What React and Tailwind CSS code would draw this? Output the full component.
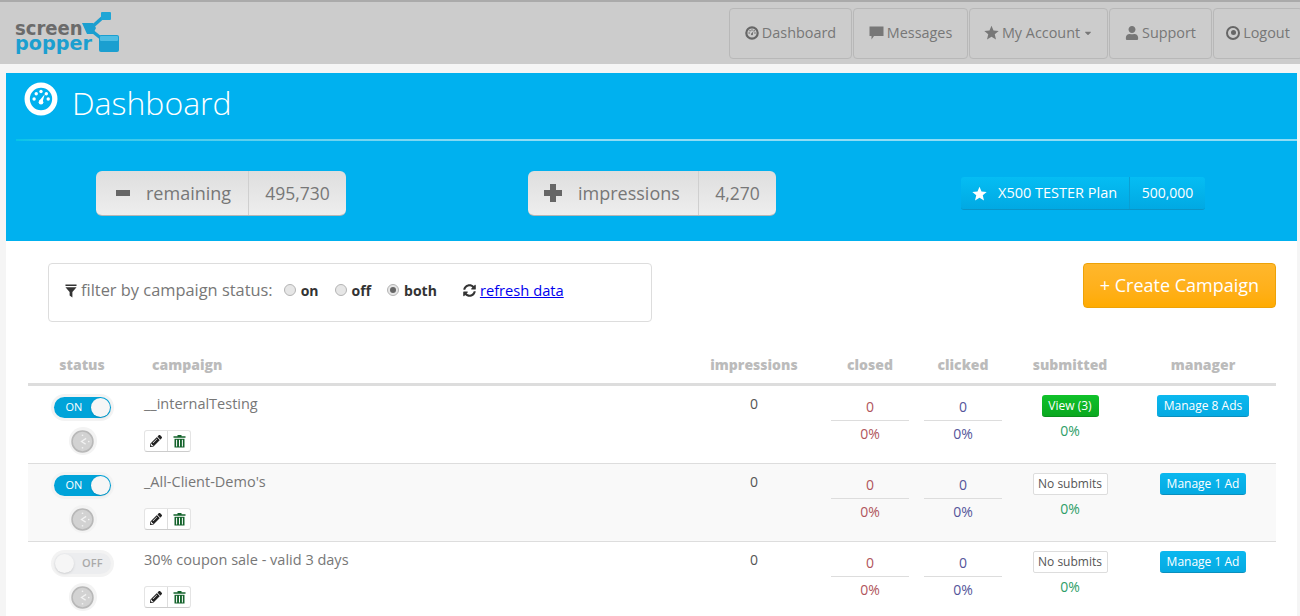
import React from "react";
import { FaUser, FaSyncAlt, FaPencilAlt, FaCaretDown } from "react-icons/fa";

function Gauge({ size = 14, color = "#777", bg = "transparent" }) {
  return (
    <svg width={size} height={size} viewBox="0 0 32 32" className="shrink-0">
      <circle cx="16" cy="16" r="13" fill={bg} stroke={color} strokeWidth="5" />
      <circle cx="9.5" cy="16" r="1.6" fill={color} />
      <circle cx="11.5" cy="11" r="1.6" fill={color} />
      <circle cx="16" cy="9" r="1.6" fill={color} />
      <circle cx="21" cy="11" r="1.6" fill={color} />
      <circle cx="22.8" cy="16" r="1.6" fill={color} />
      <path d="M19.5 11.5 L17.5 18.5 L14.5 17.5 Z" fill={color} />
      <circle cx="16" cy="19" r="2.2" fill={color} />
    </svg>
  );
}

function Star({ size = 15, color = "#fff" }) {
  return (
    <svg width={size} height={size} viewBox="0 0 24 24" className="shrink-0">
      <path d="M12 1 L15.2 8.8 L23.5 9.4 L17.2 14.8 L19.2 23 L12 18.6 L4.8 23 L6.8 14.8 L0.5 9.4 L8.8 8.8 Z" fill={color} />
    </svg>
  );
}

function Bubble() {
  return (
    <svg width="15" height="14" viewBox="0 0 15 14" className="shrink-0">
      <path d="M0.5 0.5 H14.5 V10 H5 L2.5 13.5 V10 H0.5 Z" fill="#777" />
    </svg>
  );
}

function Trash() {
  return (
    <svg width="13" height="14" viewBox="0 0 13 14">
      <path d="M4.5 1 H8.5 V2.2 H12.5 V3.8 H0.5 V2.2 H4.5 Z" fill="#14632c" />
      <path d="M1.5 4.8 H11.5 V13.5 H1.5 Z" fill="#14632c" />
      <path d="M3.6 5.8 V12.5 M6.5 5.8 V12.5 M9.4 5.8 V12.5" stroke="#fff" strokeWidth="1" />
    </svg>
  );
}

function Logo() {
  return (
    <div className="relative w-[104px] h-[42px] ml-[16px] mt-[10px]">
      <div className="absolute left-[-1px] top-[9px] text-[19px] leading-[14px] font-extrabold text-[#6b6b6b] [font-family:'DejaVu_Sans',sans-serif] scale-x-[0.95] origin-left">screen</div>
      <div className="absolute left-[-1px] top-[23px] text-[20px] leading-[17px] font-extrabold text-[#1b9fd0] [font-family:'DejaVu_Sans',sans-serif] scale-x-[0.96] origin-left">popper</div>
      <svg width="104" height="42" viewBox="0 0 104 42" className="absolute left-0 top-0">
        <path d="M76 15 L86 6" stroke="#1b9fd0" strokeWidth="3.5" fill="none" />
        <path d="M76 19 L86 27" stroke="#1b9fd0" strokeWidth="3.5" fill="none" />
        <rect x="85" y="0" width="10" height="8" rx="1" fill="#1fa6d6" />
        <path d="M66 11 H77 L80 16 L77 22 H71 Z" fill="#1b9fd0" />
        <rect x="83" y="23" width="20" height="17" rx="2" fill="#1b9fd0" />
        <rect x="84" y="24" width="18" height="5" rx="1" fill="#4fbde3" />
      </svg>
    </div>
  );
}

function NavBtn({ w, icon, children }) {
  return (
    <div style={{ width: w }} className="h-[51px] shrink-0 flex items-center justify-center gap-[3px] pb-[2px] border border-[#b8b8b8] rounded-[4px] text-[14.4px] text-[#777]">
      {icon}
      {children}
    </div>
  );
}

function Stat({ icon, label, value, w, labelW }) {
  return (
    <div style={{ width: w }} className="h-[45px] flex rounded-[6px] border-b border-[#b5b5b5] bg-gradient-to-b from-[#dedede] to-[#eeeeee] text-[18px] text-[#777]">
      <div style={{ width: labelW }} className="flex items-center border-r border-[#cfcfcf] shrink-0">
        <span className="w-[50px] flex justify-center text-[#666]">{icon}</span>
        <span>{label}</span>
      </div>
      <div className="flex-1 flex items-center justify-center text-[17.5px]">{value}</div>
    </div>
  );
}

function Toggle({ on }) {
  return (
    <div className="rounded-full p-[3px] bg-[#f3f3f3] w-[63px] h-[27px]">
      {on ? (
        <div className="h-[21px] rounded-full bg-[#00a3d9] flex items-center justify-between pl-[12px] pr-[1px]">
          <span className="text-[11px] text-white">ON</span>
          <span className="w-[19px] h-[19px] rounded-full bg-[#f6f6f6] shadow" />
        </div>
      ) : (
        <div className="h-[21px] rounded-full bg-[#ecedef] flex items-center justify-between pl-[1px] pr-[8px]">
          <span className="w-[19px] h-[19px] rounded-full bg-[#f6f6f6] shadow" />
          <span className="text-[11px] font-semibold text-[#aaa]">OFF</span>
        </div>
      )}
    </div>
  );
}

function Clock() {
  return (
    <div className="w-[28px] h-[28px] ml-[1px] rounded-full bg-[#f3f3f3] flex items-center justify-center">
      <svg width="23" height="23" viewBox="0 0 22 22">
        <circle cx="11" cy="11" r="10" fill="#d2d2d2" stroke="#b8b8b8" strokeWidth="1.5" />
        <path d="M14.5 8 L10 11 L14 13.5" stroke="#f2f2f2" strokeWidth="1.2" fill="none" />
        <circle cx="17" cy="11" r="0.8" fill="#f2f2f2" />
        <circle cx="11" cy="17" r="0.8" fill="#f2f2f2" />
        <circle cx="11" cy="5" r="0.8" fill="#f2f2f2" />
      </svg>
    </div>
  );
}

function Ratio({ n, p, color }) {
  return (
    <div style={{ color }} className="flex flex-col items-center pt-[11px] text-[14px]">
      <div className="w-[78px] h-[24px] border-b border-[#ddd] text-center leading-[20px]">{n}</div>
      <div className="leading-[20px] mt-[3px]">{p}</div>
    </div>
  );
}

function Row({ name, on, submit, manage, stripe, last }) {
  return (
    <div className={`grid grid-cols-[108px_548px_140px_92px_94px_120px_146px] h-[78px] ${last ? "" : "border-b border-[#ddd]"} ${stripe ? "bg-[#f9f9f9]" : "bg-white"}`}>
      <div className="flex flex-col items-center pt-[8px] gap-[6px]">
        <Toggle on={on} />
        <Clock />
      </div>
      <div className="pl-[8px] pt-[8px]">
        <div className="text-[14.5px] leading-[20px] text-[#777]">{name}</div>
        <div className="mt-[16px] flex w-[47px] h-[22px] rounded-[3px] border border-[#e4e4e4] border-b-[#ccc] bg-white">
          <span className="w-[23px] flex items-center justify-center border-r border-[#ddd]"><FaPencilAlt size={12} color="#222" /></span>
          <span className="flex-1 flex items-center justify-center"><Trash /></span>
        </div>
      </div>
      <div className="text-center pt-[8px] text-[14px] leading-[20px] text-[#555]">0</div>
      <Ratio n="0" p="0%" color="#b0555c" />
      <Ratio n="0" p="0%" color="#55559a" />
      <div className="flex flex-col items-center pt-[9px] text-[14px]">
        {submit ? (
          <span className="h-[22px] w-[57px] rounded-[3px] bg-gradient-to-b from-[#10c22a] to-[#0aa820] border-b border-[#0a8f1c] text-white text-[12px] flex items-center justify-center">{submit}</span>
        ) : (
          <span className="h-[22px] w-[75px] rounded-[2px] bg-white border border-[#ddd] text-[#555] text-[12px] flex items-center justify-center">No submits</span>
        )}
        <span className="mt-[4px] leading-[20px] text-[#2e9e68]">0%</span>
      </div>
      <div className="flex justify-center pt-[9px]">
        <span className="h-[22px] px-[7px] rounded-[3px] bg-gradient-to-b from-[#0bb8ef] to-[#05aae2] border-b border-[#0a8fbd] text-white text-[12px] flex items-center">{manage}</span>
      </div>
    </div>
  );
}

function Radio({ checked, label }) {
  return (
    <span className="flex items-center gap-[5px]">
      <span className="w-[12px] h-[12px] rounded-full border border-[#b4b4b4] bg-[#e6e6e6] flex items-center justify-center mt-[-2px]">
        {checked && <span className="w-[6px] h-[6px] rounded-full bg-[#666]" />}
      </span>
      <b className="text-[14px] font-bold text-[#333]">{label}</b>
    </span>
  );
}

export default function App() {
  const F = "[font-family:'Open_Sans',sans-serif]";
  return (
    <div className={`w-[1300px] h-[616px] overflow-hidden bg-[#f5f5f5] ${F}`}>
      <header className="h-[64px] bg-[#cccccc] border-t-2 border-[#aaaaaa] flex justify-between">
        <Logo />
        <nav className="flex gap-[1px] pt-[6px] w-[571px] overflow-hidden">
          <NavBtn w={123} icon={<Gauge size={14} color="#666" />}>Dashboard</NavBtn>
          <NavBtn w={115} icon={<Bubble />}>Messages</NavBtn>
          <NavBtn w={139} icon={<Star size={15} color="#777" />}>My Account <FaCaretDown size={10} /></NavBtn>
          <NavBtn w={103} icon={<FaUser size={14} color="#777" />}>Support</NavBtn>
          <NavBtn w={90} icon={<span className="w-[14px] h-[14px] rounded-full border-2 border-[#666] flex items-center justify-center"><span className="w-[5px] h-[5px] rounded-full bg-[#666]" /></span>}>Logout</NavBtn>
        </nav>
      </header>
      <main className="ml-[6px] mr-[3px] mt-[9px]">
        <section className="h-[168px] bg-[#00b1ef] pl-[10px]">
          <div className="flex h-[66px]">
            <div className="ml-[8px] mt-[9px]"><Gauge size={34} color="#fff" /></div>
            <h1 className="ml-[14px] mt-[8px] text-[32px] leading-[44px] font-light text-white">Dashboard</h1>
          </div>
          <div className="h-[2px] bg-gradient-to-r from-[#06c4e8] to-[#8fdcf5] to-40%" />
          <div className="flex pt-[30px] items-start">
            <div className="ml-[80px]">
              <Stat icon={<span className="block w-[14px] h-[6px] ml-[4px] bg-[#666]" />} label="remaining" value="495,730" w={250} labelW={153} />
            </div>
            <div className="ml-[182px]">
              <Stat
                icon={
                  <svg width="18" height="18" viewBox="0 0 18 18"><path d="M6 0 H12 V6 H18 V12 H12 V18 H6 V12 H0 V6 H6 Z" fill="#666" /></svg>
                }
                label="impressions"
                value="4,270"
                w={248}
                labelW={171}
              />
            </div>
            <div className="ml-[185px] mt-[6px] w-[244px] h-[33px] flex rounded-[3px] bg-gradient-to-b from-[#05bdf3] to-[#01a9e3] border-b border-[#0a94c6] text-white text-[14px]">
              <div className="w-[169px] flex items-center border-r border-[#0a9fd3] text-[14.5px]">
                <span className="ml-[11px] mr-[11px]"><Star size={15} /></span>X500 TESTER Plan
              </div>
              <div className="flex-1 flex items-center justify-center pb-[1px]">500,000</div>
            </div>
          </div>
        </section>
        <section className="bg-white h-[400px] pl-[22px] pr-[21px]">
          <div className="flex justify-between items-start pt-[22px] h-[114px] pl-[20px]">
            <div className="w-[604px] h-[59px] rounded-[4px] border border-[#ddd] flex items-center pl-[16px] pb-[4px] text-[16.4px] text-[#777]">
              <svg width="12" height="14" viewBox="0 0 13 14" className="mr-[4px] shrink-0"><path d="M0.5 0 H12.5 V1.5 H0.5 Z M0.5 3 H12.5 L8 8 V14 L5 12 V8 Z" fill="#333" /></svg>
              <span>filter by campaign status:</span>
              <span className="ml-[11px]"><Radio label="on" /></span>
              <span className="ml-[16px]"><Radio label="off" /></span>
              <span className="ml-[16px]"><Radio checked label="both" /></span>
              <FaSyncAlt size={13} color="#333" className="ml-[26px] mr-[4px]" />
              <a className="text-[14.7px] text-[#0000ee] underline">refresh data</a>
            </div>
            <button className="h-[45px] w-[193px] rounded-[4px] bg-gradient-to-b from-[#ffb72c] to-[#ffab00] border border-[#eda208] text-white text-[18px]">+ Create Campaign</button>
          </div>
          <div className="grid grid-cols-[108px_548px_140px_92px_94px_120px_146px] h-[28px] text-[14px] font-extrabold text-[#bbb] border-b-[3px] border-[#ddd] box-content leading-[20px]">
            <div className="text-center">status</div>
            <div className="pl-[16px]">campaign</div>
            <div className="text-center">impressions</div>
            <div className="text-center">closed</div>
            <div className="text-center">clicked</div>
            <div className="text-center">submitted</div>
            <div className="text-center">manager</div>
          </div>
          <Row name="__internalTesting" on submit="View (3)" manage="Manage 8 Ads" />
          <Row name="_All-Client-Demo's" on manage="Manage 1 Ad" stripe />
          <Row name="30% coupon sale - valid 3 days" manage="Manage 1 Ad" last />
        </section>
      </main>
    </div>
  );
}
